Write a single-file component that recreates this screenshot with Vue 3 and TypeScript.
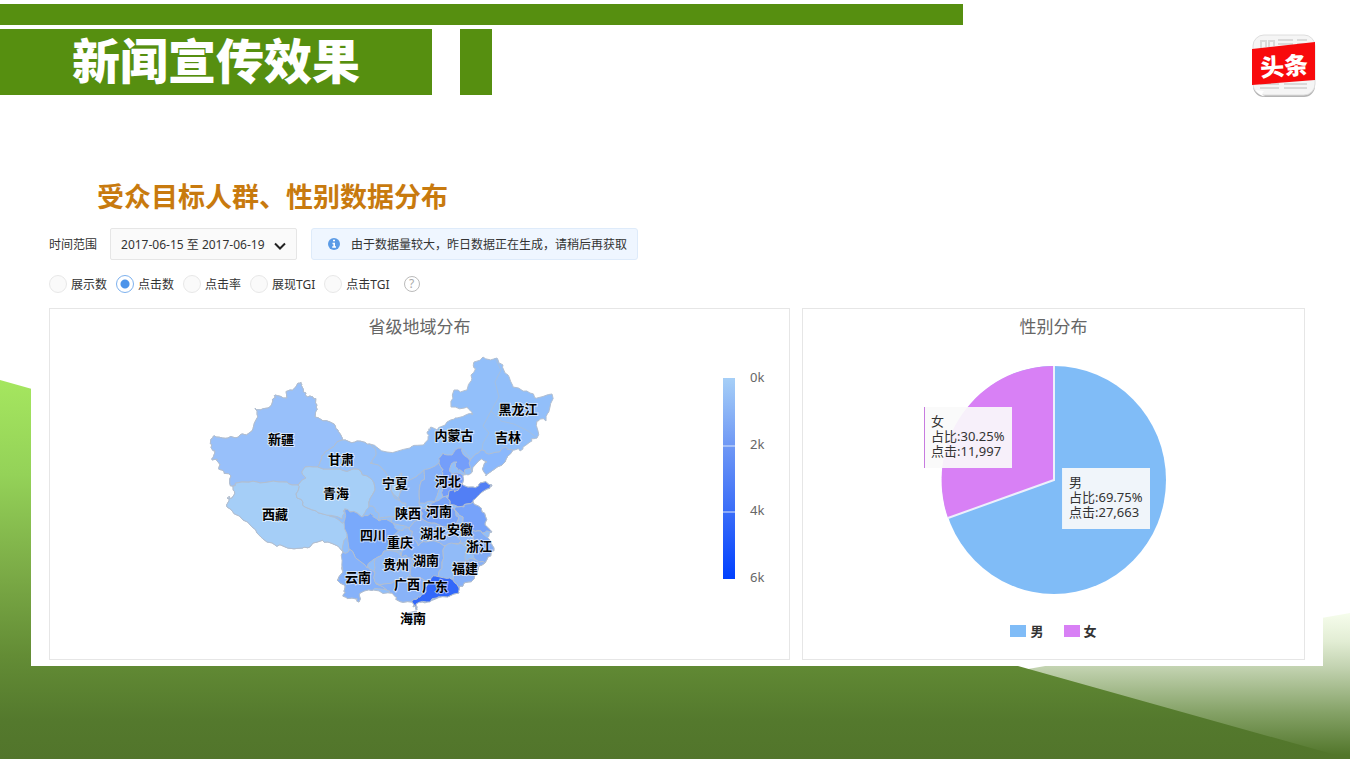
<script setup lang="ts">
import { ref } from 'vue'

type Point = [number, number]
interface Province { id: string; fill: string; points: string }
interface Label { text: string; x: number; y: number }

const range = ref('2017-06-15 至 2017-06-19')
const metric = ref('点击数')
const metrics: string[] = ['展示数', '点击数', '点击率', '展现TGI', '点击TGI']

const parse = (s: string): Point[] =>
  s.trim().split(/\s+/).map((p) => p.split(',').map(Number) as Point)

// The offset depends only on the midpoint, so neighbours keep a shared border.
function midpoint(a: Point, b: Point, amp: number): Point {
  const mx = (a[0] + b[0]) / 2
  const my = (a[1] + b[1]) / 2
  const h = Math.sin(mx * 12.9898 + my * 78.233) * 43758.5453
  const k = Math.sin(mx * 39.425 + my * 11.135) * 24634.6345
  return [mx + (h - Math.floor(h) - 0.5) * amp, my + (k - Math.floor(k) - 0.5) * amp]
}

function roughen(points: Point[], amp: number): Point[] {
  return points.flatMap((p, i) => [p, midpoint(p, points[(i + 1) % points.length], amp)])
}

function outline(s: string): string {
  return roughen(roughen(parse(s), 5), 3)
    .map((p) => `${p[0].toFixed(1)},${p[1].toFixed(1)}`)
    .join(' ')
}

const country = outline(`211,439 216,437 228,438 240,435 252,431 256,420 255,408 268,408 272,400 275,395
 287,398 290,390 298,383 302,384 306,393 313,397 317,405 315,417 330,422 338,430 342,440 357,441 370,444
 387,452 410,448 423,445 428,440 427,432 430,428 438,429 447,422 457,418 473,414 467,407 451,407 454,390
 467,390 471,375 474,368 474,362 483,357 497,358 503,365 508,375 513,387 530,393 537,398 552,394 550,407
 546,421 537,421 537,438 530,442 520,451 513,450 505,462 486,475 483,470 487,462 480,460 472,472 463,475
 460,484 463,485 473,487 480,483 492,485 487,489 477,497 473,502 482,512 485,523 492,532 485,538 492,545
 491,553 485,563 477,573 468,582 460,587 459,593 440,597 422,602 416,604 417,610 413,607 412,602 397,600
 392,593 373,590 360,593 359,602 352,598 343,595 345,588 337,580 343,572 343,562 343,552 328,542 313,543
 303,548 283,546 267,542 257,533 243,520 227,507 227,498 232,498 233,486 231,476 222,470 218,462 212,460
 215,452 211,448`)

const shapes: [string, string, string][] = [
  ['xinjiang', '#98c0fa', '211,439 216,437 228,438 240,435 252,431 256,420 255,408 268,408 272,400 275,395 287,398 290,390 298,383 302,384 306,393 313,397 317,405 315,417 330,422 338,430 342,440 325,452 320,462 318,467 303,470 306,478 298,485 283,482 260,483 242,482 233,486 231,476 222,470 218,462 212,460 215,452 211,448'],
  ['tibet', '#a5cef7', '233,486 242,482 260,483 283,482 298,485 297,498 305,507 323,514 339,520 344,522 347,537 343,552 328,542 313,543 303,548 283,546 267,542 257,533 243,520 227,507 227,498 232,498'],
  ['qinghai', '#a6cff7', '303,470 318,467 340,469 358,469 370,478 375,490 369,506 362,517 350,512 344,510 342,519 323,514 305,507 297,498 298,485 306,478'],
  ['gansu', '#96c1fa', '342,440 357,441 370,444 376,455 370,463 383,470 393,480 391,490 400,501 406,505 393,517 379,521 375,511 369,506 375,490 370,478 358,469 340,469 318,467 320,462 325,452'],
  ['ningxia', '#a1caf8', '393,480 402,473 404,485 400,500 391,490'],
  ['shaanxi', '#8eb9f8', '404,485 416,477 424,470 420,485 419,503 422,519 409,528 393,523 393,517 406,505 400,501'],
  ['shanxi', '#86b1f8', '424,470 439,463 443,473 440,487 435,502 419,503 420,485'],
  ['hebei', '#749efa', '439,463 443,453 452,455 462,448 465,456 472,468 465,474 458,470 457,462 451,465 452,474 463,475 460,484 454,492 443,497 440,487 443,473'],
  ['shandong', '#527ff5', '449,491 454,492 460,484 463,485 473,487 480,483 492,485 487,489 477,497 473,502 464,506 450,504'],
  ['henan', '#7aa5f8', '435,502 443,497 450,504 454,509 459,518 452,529 439,525 422,519 419,508'],
  ['jiangsu', '#77a3fa', '454,509 464,506 473,502 482,512 485,523 492,532 482,533 472,530 463,517'],
  ['anhui', '#91b9f8', '454,509 463,517 472,530 475,541 461,543 455,535 452,529 459,518'],
  ['hubei', '#8db5f7', '422,519 439,525 452,529 461,541 445,546 430,541 418,546 411,538 409,528'],
  ['sichuan', '#79a9fb', '344,510 350,512 362,517 371,514 379,521 393,523 400,530 392,540 394,549 384,551 375,559 367,568 357,559 349,549 344,522'],
  ['chongqing', '#91baf8', '393,540 400,530 409,528 411,538 404,547 401,556 393,549'],
  ['yunnan', '#86b2fa', '349,549 357,559 367,568 375,573 376,583 387,590 373,590 360,593 359,602 352,598 343,595 345,588 337,580 343,572 343,552'],
  ['guizhou', '#91baf8', '375,559 384,551 401,556 411,558 410,575 396,580 376,583 375,573'],
  ['hunan', '#84b0f9', '411,538 418,546 430,541 445,546 442,562 440,579 424,580 410,575 411,558 401,556'],
  ['jiangxi', '#91bbf8', '445,546 461,543 469,549 466,560 457,569 453,580 440,579 442,562'],
  ['zhejiang', '#82adf7', '472,530 482,533 492,545 491,553 485,563 476,560 469,549 475,541'],
  ['fujian', '#86b0f8', '466,560 476,560 485,563 477,573 468,582 460,587 453,580 457,569'],
  ['guangxi', '#89b3f8', '376,583 396,580 410,575 424,580 426,588 418,598 412,602 397,600 392,593 387,590'],
  ['guangdong', '#3268fa', '431,579 440,577 453,580 460,587 459,593 440,597 430,602 416,604 417,610 413,607 412,602 418,598 426,592'],
  ['liaoning', '#8bb8fc', '471,459 482,450 493,453 505,447 513,450 505,462 486,475 483,470 487,462 480,460 472,472'],
]
const provinces: Province[] = shapes.map(([id, fill, s]) => ({ id, fill, points: outline(s) }))

const northBorders = ['495,358 501,370 495,382 499,397 491,411 501,421 514,424 528,431 537,438', '491,411 483,426 489,433 483,443 482,450', '462,448 471,459']

const labels: Label[] = [
  { text: '新疆', x: 281, y: 444 }, { text: '甘肃', x: 341, y: 464 }, { text: '青海', x: 336, y: 498 },
  { text: '西藏', x: 275, y: 519 }, { text: '黑龙江', x: 518, y: 414 }, { text: '吉林', x: 508, y: 442 },
  { text: '内蒙古', x: 454, y: 440 }, { text: '宁夏', x: 395, y: 488 }, { text: '河北', x: 448, y: 486 },
  { text: '陕西', x: 408, y: 518 }, { text: '河南', x: 439, y: 516 }, { text: '四川', x: 373, y: 540 },
  { text: '重庆', x: 400, y: 547 }, { text: '湖北', x: 433, y: 538 }, { text: '安徽', x: 460, y: 534 },
  { text: '浙江', x: 479, y: 551 }, { text: '贵州', x: 396, y: 569 }, { text: '湖南', x: 426, y: 565 },
  { text: '福建', x: 465, y: 573 }, { text: '云南', x: 358, y: 582 }, { text: '广西', x: 407, y: 589 },
  { text: '广东', x: 435, y: 591 }, { text: '海南', x: 413, y: 623 },
]

const ticks = [
  { text: '0k', y: 382 }, { text: '2k', y: 449 }, { text: '4k', y: 515 }, { text: '6k', y: 582 },
]

const tips = [
  { x: 924, y: 407, edge: '#c77be0', lines: ['女', '占比:30.25%', '点击:11,997'] },
  { x: 1062, y: 468, edge: '#e8f3fc', lines: ['男', '占比:69.75%', '点击:27,663'] },
]
</script>

<template>
  <div class="slide">
    <svg class="backdrop" viewBox="0 0 1350 759" preserveAspectRatio="none" aria-hidden="true">
      <defs>
        <linearGradient id="hill" gradientUnits="userSpaceOnUse" x1="0" y1="380" x2="0" y2="759">
          <stop offset="0" stop-color="#a5e65f" />
          <stop offset="0.25" stop-color="#94d258" />
          <stop offset="0.5" stop-color="#7cac47" />
          <stop offset="0.73" stop-color="#638c35" />
          <stop offset="0.9" stop-color="#54792d" />
          <stop offset="1" stop-color="#52752b" />
        </linearGradient>
        <linearGradient id="mist" gradientUnits="userSpaceOnUse" x1="0" y1="613" x2="0" y2="755">
          <stop offset="0" stop-color="#f6fdec" />
          <stop offset="0.2" stop-color="#e2edd4" />
          <stop offset="0.38" stop-color="#c3d3b1" />
          <stop offset="0.7" stop-color="#85a267" />
          <stop offset="1" stop-color="#52762b" />
        </linearGradient>
      </defs>
      <polygon points="1350,613 1028,669 1028,759 1350,759" fill="url(#mist)" />
      <polygon points="0,380 1018,666 1350,759 0,759" fill="url(#hill)" />
    </svg>

    <header class="masthead">
      <div class="stripe"></div>
      <div class="title-row">
        <h1>新闻宣传效果</h1>
        <div class="block"></div>
        <svg class="logo" width="64" height="64" viewBox="1252 34 64 64" role="img" aria-label="头条">
          <rect x="1253" y="37" width="62" height="60" rx="11" fill="#b5b5b5" />
          <rect x="1253" y="35" width="62" height="60" rx="11" fill="#f5f5f5" stroke="#dedede" />
          <g stroke="#d9d9d9" stroke-width="2">
            <path d="M1278 40H1293M1297 40H1307M1278 44H1293M1297 44H1307M1260 84H1279M1284 84H1307M1260 88H1279M1284 88H1307" />
            <path d="M1261 48V41H1266V47M1269 47V41H1274V46" fill="none" />
          </g>
          <path d="M1255 90Q1261 97 1265 96Q1260 95 1264 91Z" fill="#fff" />
          <polygon points="1252,49 1315,42 1315,80 1252,85" fill="#f80a0c" />
          <text x="1284" y="75" text-anchor="middle" transform="rotate(-4 1284 66)">头条</text>
        </svg>
      </div>
    </header>

    <main class="report">
      <h2>受众目标人群、性别数据分布</h2>

      <div class="filters">
        <label for="range">时间范围</label>
        <div class="select-box">
          <select id="range" v-model="range">
            <option>2017-06-15 至 2017-06-19</option>
          </select>
          <svg class="chevron" width="12" height="8" viewBox="0 0 12 8" aria-hidden="true">
            <path d="M1 1.5L6 6.5L11 1.5" fill="none" stroke="#222" stroke-width="2" />
          </svg>
        </div>
        <p class="notice">
          <svg width="12" height="12" viewBox="0 0 12 12" aria-hidden="true">
            <circle cx="6" cy="6" r="6" fill="#5b9be6" />
            <path d="M5 2.5H7M4.5 5.5H6.2V9M4.2 9H8" stroke="#fff" stroke-width="1.6" fill="none" />
          </svg>
          <span>由于数据量较大，昨日数据正在生成，请稍后再获取</span>
        </p>
      </div>

      <div class="metrics" role="radiogroup" aria-label="指标">
        <label v-for="m in metrics" :key="m">
          <input v-model="metric" type="radio" name="metric" :value="m" />
          <span>{{ m }}</span>
        </label>
        <button class="help" type="button">?</button>
      </div>

      <div class="panels">
        <section class="panel">
          <h3>省级地域分布</h3>
          <svg class="chart" viewBox="50 345 739 314">
            <defs>
              <linearGradient id="scale" x1="0" y1="0" x2="0" y2="1">
                <stop offset="0" stop-color="#a6cff7" />
                <stop offset="0.33" stop-color="#7099f5" />
                <stop offset="0.66" stop-color="#3a6df8" />
                <stop offset="1" stop-color="#0040ff" />
              </linearGradient>
            </defs>
            <polygon class="land" :points="country" fill="#92bffa" />
            <polygon v-for="p in provinces" :key="p.id" class="land" :points="p.points" :fill="p.fill" />
            <polyline v-for="b in northBorders" :key="b" class="border" :points="b" />
            <path class="land" d="M408 613L416 611L420 616L415 624L409 625L406 619Z" fill="#a1c8f8" />
            <text v-for="l in labels" :key="l.text" class="place" :x="l.x" :y="l.y">{{ l.text }}</text>
            <rect x="723" y="378" width="12" height="201" fill="url(#scale)" />
            <path d="M723 446H735M723 512H735" stroke="#dce8fb" />
            <text v-for="t in ticks" :key="t.text" class="tick" x="750" :y="t.y">{{ t.text }}</text>
          </svg>
        </section>

        <section class="panel">
          <h3>性别分布</h3>
          <svg class="chart" viewBox="803 345 501 275">
            <ellipse cx="1054" cy="480" rx="112" ry="114" fill="#80bcf7" />
            <path d="M1054 480V366A112 114 0 0 0 948 518Z" fill="#d880f5" />
            <path d="M1054 366V480L948 518" fill="none" stroke="#edf0fc" stroke-width="2" />
            <g v-for="t in tips" :key="t.x">
              <rect :x="t.x" :y="t.y" width="88" height="61" fill="#fafafa" fill-opacity="0.92" />
              <rect :x="t.x" :y="t.y" width="1" height="61" :fill="t.edge" />
              <text v-for="(line, i) in t.lines" :key="line" class="tip" :x="t.x + 7" :y="t.y + 19 + i * 15">{{ line }}</text>
            </g>
          </svg>
          <ul class="legend">
            <li><i class="male"></i>男</li>
            <li><i class="female"></i>女</li>
          </ul>
        </section>
      </div>
    </main>
  </div>
</template>

<style>
body {
  margin: 0;
}
</style>

<style scoped>
.slide {
  position: relative;
  box-sizing: border-box;
  min-height: 100vh;
  padding-top: 4px;
  background: #fff;
  color: #333;
  font-family: "Noto Sans", "Noto Sans CJK SC", sans-serif;
  font-size: 12px;
}
.backdrop {
  position: absolute;
  inset: 0;
  width: 100%;
  height: 100%;
}
.masthead,
.report {
  position: relative;
}
.stripe {
  width: 71.3%;
  height: 21px;
  background: #568f10;
}
.title-row {
  display: flex;
  height: 66px;
  margin-top: 4px;
}
h1 {
  box-sizing: border-box;
  width: 32%;
  margin: 0;
  padding-left: 72px;
  background: #568f10;
  color: #fff;
  font-size: 48px;
  font-weight: 900;
  line-height: 64px;
  white-space: nowrap;
}
.block {
  width: 32px;
  margin-left: 28px;
  background: #568f10;
}
.logo {
  margin: 5px 34px 0 auto;
}
.logo text {
  fill: #fff;
  font-size: 24px;
  font-weight: 900;
}
.report {
  margin: 72px 27px 0 31px;
  padding: 12px 18px 6px;
  background: #fff;
}
h2 {
  margin: 0 0 13px 48px;
  color: #c87a0e;
  font-size: 27px;
  font-weight: 700;
  line-height: 36px;
}
.filters {
  display: flex;
  align-items: center;
}
.select-box {
  position: relative;
  margin: 0 14px 0 13px;
}
select {
  display: block;
  box-sizing: border-box;
  width: 187px;
  height: 32px;
  padding: 0 10px;
  border: 1px solid #e6e6e6;
  border-radius: 2px;
  background: #fafafa;
  color: #333;
  font: inherit;
  appearance: none;
}
.chevron {
  position: absolute;
  top: 14px;
  right: 11px;
  pointer-events: none;
}
.notice {
  display: flex;
  align-items: center;
  gap: 11px;
  box-sizing: border-box;
  height: 32px;
  margin: 0;
  padding: 0 10px 0 16px;
  border: 1px solid #deebfa;
  border-radius: 3px;
  background: #eff6ff;
}
.metrics {
  display: flex;
  align-items: center;
  gap: 9px;
  height: 18px;
  margin: 15px 0;
}
.metrics label {
  display: flex;
  align-items: center;
  gap: 4px;
}
.metrics input {
  box-sizing: border-box;
  width: 18px;
  height: 18px;
  margin: 0;
  border: 1px solid #e8e8e8;
  border-radius: 50%;
  background: #fafafa;
  appearance: none;
}
.metrics input:checked {
  border-color: #7db1ee;
  background: radial-gradient(circle, #4d94ea 0 4px, #fff 5px);
}
.help {
  width: 16px;
  height: 16px;
  box-sizing: border-box;
  margin-left: 5px;
  padding: 0;
  border: 1px solid #bbb;
  border-radius: 50%;
  background: #fff;
  color: #aaa;
  font: inherit;
  line-height: 14px;
}
.panels {
  display: grid;
  grid-template-columns: 741fr 503fr;
  gap: 12px;
}
.panel {
  border: 1px solid #e6e6e6;
  background: #fff;
}
h3 {
  margin: 0;
  color: #666;
  font-size: 17px;
  font-weight: 400;
  line-height: 36px;
  text-align: center;
}
.chart {
  display: block;
  width: 100%;
}
.land {
  stroke: #b3bfd0;
  stroke-linejoin: round;
}
.border {
  fill: none;
  stroke: #a5bfe0;
}
.place {
  fill: #000;
  stroke: #fff;
  stroke-opacity: 0.6;
  stroke-width: 2px;
  paint-order: stroke;
  font-size: 13px;
  font-weight: 700;
  text-anchor: middle;
}
.tick {
  fill: #666;
  font-size: 13px;
}
.tip {
  fill: #333;
  font-size: 13px;
}
.legend {
  display: flex;
  justify-content: center;
  gap: 20px;
  margin: 0;
  padding: 0;
  color: #333;
  font-size: 13px;
  font-weight: 700;
  line-height: 22px;
  list-style: none;
}
.legend li {
  display: flex;
  align-items: center;
  gap: 4px;
}
.legend i {
  width: 16px;
  height: 12px;
}
.male {
  background: #80bcf7;
}
.female {
  background: #d880f5;
}
</style>
